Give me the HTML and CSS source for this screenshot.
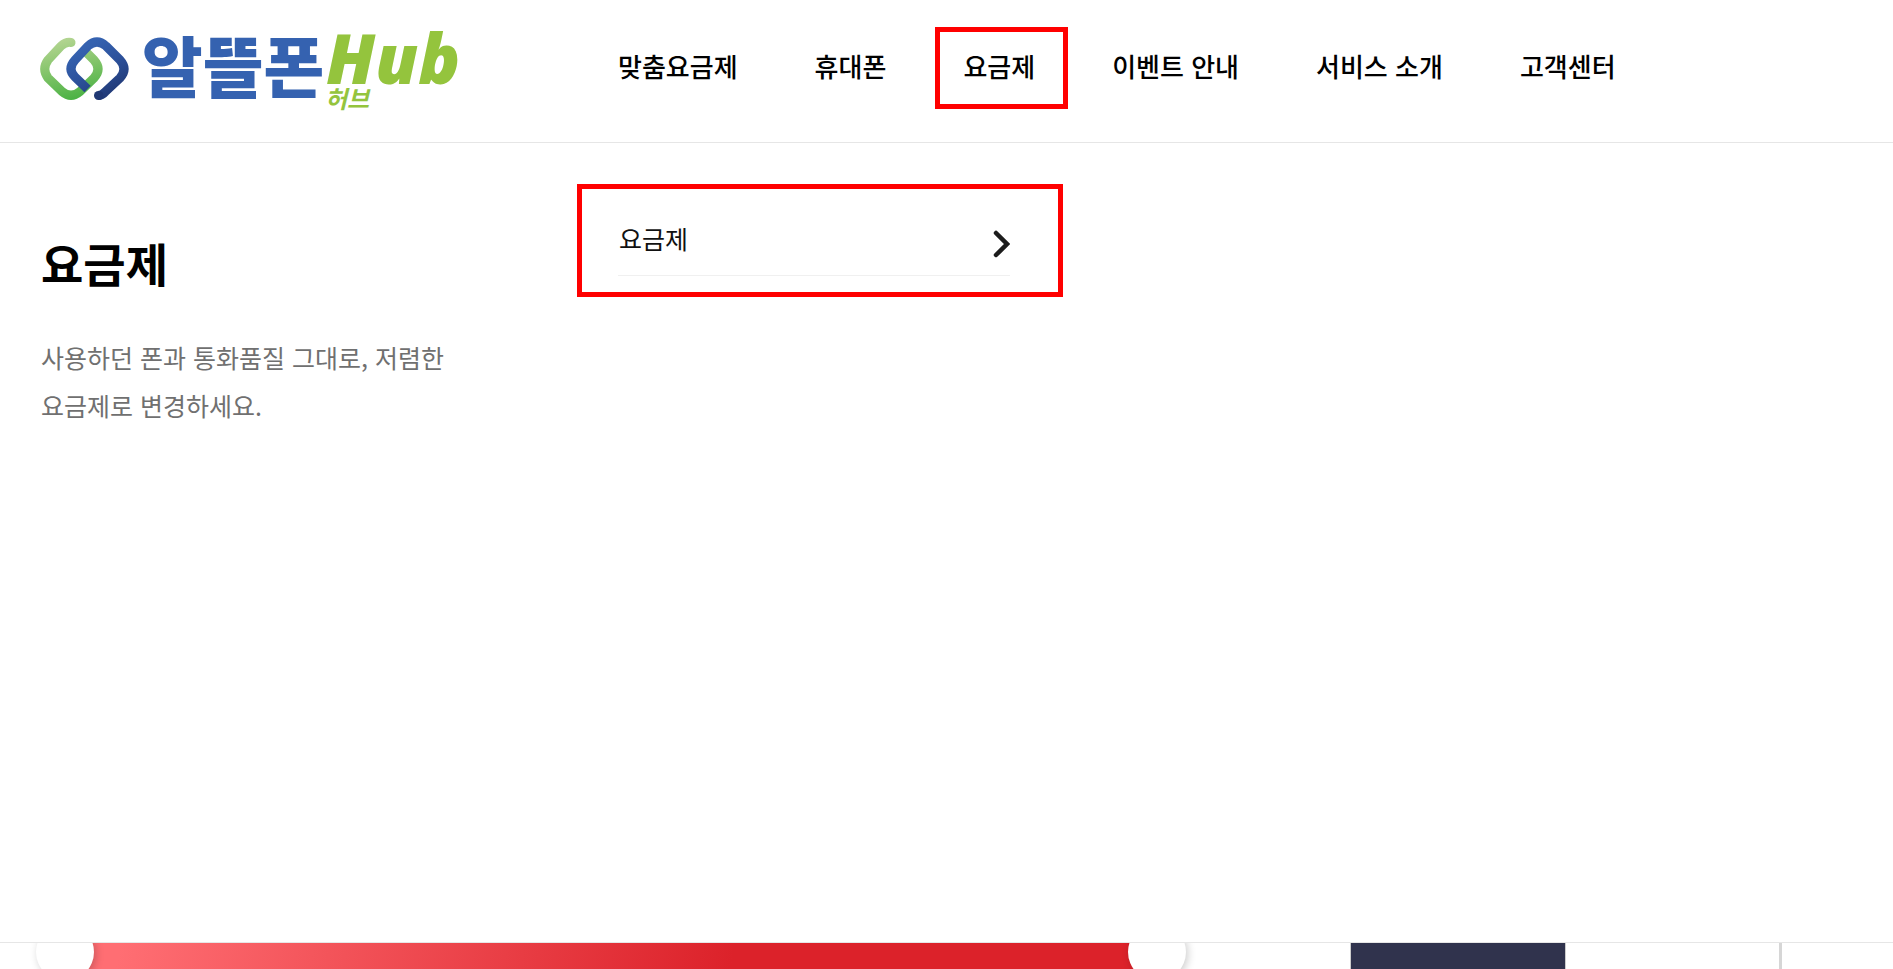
FILE: index.html
```html
<!DOCTYPE html>
<html lang="ko">
<head>
<meta charset="utf-8">
<meta name="viewport" content="width=device-width, initial-scale=1">
<title>알뜰폰Hub 요금제</title>
<link rel="stylesheet" href="styles.css">
</head>
<body>
<header class="header">
  <a class="logo" href="#" aria-label="알뜰폰 허브">
    <svg class="logo-art" width="430" height="90" viewBox="40 24 430 90">
      <defs>
        <linearGradient id="green" gradientUnits="userSpaceOnUse" x1="65" y1="38" x2="80" y2="98">
          <stop offset="0" stop-color="#b4d592"/>
          <stop offset=".45" stop-color="#86c56c"/>
          <stop offset="1" stop-color="#4bb244"/>
        </linearGradient>
        <linearGradient id="blue" gradientUnits="userSpaceOnUse" x1="88" y1="45" x2="116" y2="94">
          <stop offset="0" stop-color="#3562b0"/>
          <stop offset=".45" stop-color="#2d529c"/>
          <stop offset="1" stop-color="#203874"/>
        </linearGradient>
      </defs>
      <g fill="none" stroke-width="9" stroke-linecap="round" stroke-linejoin="round">
        <path stroke="url(#green)" d="M71 42.500 Q66 41.500 61 46 L48 60 Q41.500 69 48 78 L62 91.500 Q71 99 80 91.500 L94 78 Q102 69 94 60 L87 53"/>
        <path stroke="url(#blue)" stroke-linecap="butt" d="M87.500 89 L75 77 Q67 69 75 60 L88 46 Q97 38 106 46 L120 60 Q128 69 120 78 L105 92 Q102 95.500 98 95.500"/>
        <path stroke="#203874" d="M98.500 95.500 L99 95.500"/>
      </g>
      <text class="logo-name" x="142" y="92">알뜰폰</text>
      <text class="logo-hub" x="326" y="84">Hub</text>
      <text class="logo-sub" x="325" y="108">허브</text>
    </svg>
  </a>
  <nav class="nav" aria-label="주 메뉴">
    <a class="nav-link" href="#">맞춤요금제</a>
    <a class="nav-link" href="#">휴대폰</a>
    <a class="nav-link nav-link-active" href="#">요금제</a>
    <a class="nav-link" href="#">이벤트 안내</a>
    <a class="nav-link" href="#">서비스 소개</a>
    <a class="nav-link" href="#">고객센터</a>
  </nav>
</header>
<main class="panel">
  <section class="intro">
    <h1 class="intro-title">요금제</h1>
    <p class="intro-text">사용하던 폰과 통화품질 그대로, 저렴한 요금제로 변경하세요.</p>
  </section>
  <div class="submenu">
    <a class="submenu-link" href="#">
      <span>요금제</span>
      <svg width="18" height="30" viewBox="0 0 18 30" aria-hidden="true"><path d="M4 4 L15 15 L4 26" fill="none" stroke="#1c1c1c" stroke-width="4.500" stroke-linecap="round" stroke-linejoin="miter"/></svg>
    </a>
  </div>
</main>
<div class="page-strip">
  <div class="carousel">
    <button class="carousel-button" type="button" aria-label="이전"></button>
    <button class="carousel-button" type="button" aria-label="다음"></button>
  </div>
  <div class="card"></div>
  <div class="card-edge"></div>
</div>
</body>
</html>
```

FILE: styles.css
```css
* {
  box-sizing: border-box;
}

body {
  margin: 0;
  min-height: 100vh;
  display: flex;
  flex-direction: column;
  background: #fff;
  color: #000;
  font-family: "Noto Sans CJK KR", sans-serif;
}

a {
  color: inherit;
  text-decoration: none;
}

.header,
.panel {
  display: grid;
  grid-template-columns: 536px 1fr;
  padding-left: 40px;
}

.header {
  padding-top: 24px;
  padding-bottom: 28px;
  border-bottom: 1px solid #e6e6e6;
}

.logo-art {
  display: block;
  overflow: visible;
}

.logo-name {
  font-size: 66px;
  font-weight: 900;
  fill: #3562b0;
}

.logo-hub {
  font-family: "Open Sans", "Noto Sans", sans-serif;
  font-size: 69px;
  font-style: italic;
  font-weight: 800;
  fill: #94c43d;
}

.logo-sub {
  font-size: 24px;
  font-style: italic;
  font-weight: 700;
  fill: #94c43d;
}

.nav {
  display: flex;
  align-items: center;
  gap: 77px;
  height: 84px;
  padding-left: 42px;
}

.nav-link {
  position: relative;
  font-size: 26px;
  font-weight: 500;
  line-height: 38px;
  white-space: nowrap;
}

.nav-link-active::after {
  content: "";
  position: absolute;
  inset: -20px -33px -24px -28px;
  border: 5px solid #f00;
}

.panel {
  flex: 1;
  border-bottom: 1px solid #e6e6e6;
}

.intro {
  width: 410px;
  padding: 84px 0 0 1px;
}

.intro-title {
  margin: 0;
  font-size: 46px;
  font-weight: 700;
  line-height: 70px;
}

.intro-text {
  margin: 36px 0 0;
  color: #707070;
  font-size: 25px;
  line-height: 48px;
}

.submenu {
  align-self: start;
  width: 486px;
  margin: 41px 0 0 1px;
  padding: 26px 48px 16px 36px;
  border: 5px solid #f00;
}

.submenu-link {
  display: flex;
  justify-content: space-between;
  align-items: flex-start;
  height: 61px;
  padding-left: 1px;
  border-bottom: 1px solid #f0f0f0;
  color: #111;
  font-size: 25px;
  line-height: 46px;
}

.submenu-link svg {
  margin-top: 14px;
}

.page-strip {
  display: grid;
  grid-template-columns: 1150px 214px 3px;
  column-gap: 214px;
  height: 26px;
  padding-left: 36px;
  overflow: hidden;
}

.carousel {
  display: flex;
  justify-content: space-between;
  background: linear-gradient(100deg, #ff6e73 5%, #dc222a 61%) 29px 0 / 1092px 100% no-repeat;
}

.carousel-button {
  width: 58px;
  height: 58px;
  margin-top: -20px;
  padding: 0;
  border: 0;
  border-radius: 50%;
  background: #fff;
  box-shadow: 2px 2px 8px #00000033;
}

.card {
  margin-left: -49px;
  margin-right: 49px;
  background: #30334d;
  outline: 1px solid #ccc;
}

.card-edge {
  margin-left: -49px;
  margin-right: 49px;
  background: #d6d6d6;
}
```
